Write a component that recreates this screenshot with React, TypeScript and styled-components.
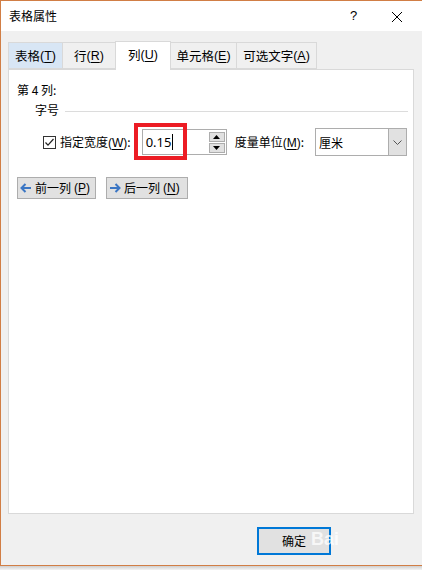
import styled, { createGlobalStyle } from 'styled-components'

const GlobalStyle = createGlobalStyle`
  html, body {
    margin: 0;
    padding: 0;
    background: #fff;
    overflow: hidden;
  }
  body {
    font-family: "Noto Sans CJK SC", "Microsoft YaHei", "Noto Sans", sans-serif;
    font-size: 12px;
    color: #000;
  }
`;

const tabs = [
  { label: '表格', key: 'T', width: 55, hover: true },
  { label: '行', key: 'R', width: 54 },
  { label: '列', key: 'U', width: 56, active: true },
  { label: '单元格', key: 'E', width: 67 },
  { label: '可选文字', key: 'A', width: 81 },
];

function Key({ k }: { k: string }) {
  return <Mnemonic>(<U>{k}</U>)</Mnemonic>;
}

export default function App() {
  return (
    <>
      <GlobalStyle />
      <Page>
        <Window>
          <TitleBar>
            <Title>表格属性</Title>
            <TitleButtons>
              <Help>?</Help>
              <Close>
                <svg width="12" height="12" viewBox="0 0 12 12">
                  <path d="M1 1L11 11M11 1L1 11" stroke="#000" strokeWidth="1" />
                </svg>
              </Close>
            </TitleButtons>
          </TitleBar>
          <Body>
            <TabStrip>
              {tabs.map(t => (
                <Tab key={t.key} $w={t.width} $active={!!t.active} $hover={!!t.hover}>
                  {t.label}<Key k={t.key} />
                </Tab>
              ))}
            </TabStrip>
            <Panel>
              <Heading>第 4 列:</Heading>
              <GroupHead>
                <span>字号</span>
                <Rule />
              </GroupHead>
              <FieldRow>
                <Check>
                  <svg width="11" height="11" viewBox="0 0 11 11">
                    <path d="M1.5 5.5L4 8.2L9.5 2" stroke="#222" strokeWidth="1.2" fill="none" />
                  </svg>
                </Check>
                <Label>指定宽度<Key k="W" />:</Label>
                <Spin>
                  <SpinText>0.15<Caret /></SpinText>
                  <SpinButtons>
                    <SpinBtn>
                      <svg width="7" height="4" viewBox="0 0 7 4"><path d="M3.5 0L7 4H0Z" fill="#000" /></svg>
                    </SpinBtn>
                    <SpinBtn>
                      <svg width="7" height="4" viewBox="0 0 7 4"><path d="M0 0H7L3.5 4Z" fill="#000" /></svg>
                    </SpinBtn>
                  </SpinButtons>
                  <Highlight />
                </Spin>
                <UnitLabel>度量单位<Key k="M" />:</UnitLabel>
                <Select>
                  <SelectText>厘米</SelectText>
                  <SelectArrow>
                    <svg width="9" height="5" viewBox="0 0 9 5">
                      <path d="M0.5 0.5L4.5 4.5L8.5 0.5" stroke="#555" strokeWidth="1" fill="none" />
                    </svg>
                  </SelectArrow>
                </Select>
              </FieldRow>
              <NavRow>
                <NavButton $w={79}>
                  <svg width="12" height="10" viewBox="0 0 12 10">
                    <path d="M11 5H2M5.5 1L1.5 5L5.5 9" stroke="#3b76c4" strokeWidth="2" fill="none" />
                  </svg>
                  前一列<Key k="P" />
                </NavButton>
                <NavButton $w={82}>
                  <svg width="12" height="10" viewBox="0 0 12 10">
                    <path d="M1 5H10M6.5 1L10.5 5L6.5 9" stroke="#3b76c4" strokeWidth="2" fill="none" />
                  </svg>
                  后一列<Key k="N" />
                </NavButton>
              </NavRow>
            </Panel>
            <Footer>
              <OkButton>
                确定
                <Watermark>Bai</Watermark>
              </OkButton>
            </Footer>
          </Body>
        </Window>
        <Shadow />
      </Page>
    </>
  );
}

const Page = styled.div`
  width: 422px;
  height: 570px;
  display: flex;
  flex-direction: column;
  overflow: hidden;
`;

const Window = styled.div`
  width: 430px;
  height: 564px;
  border-top: 1px solid #d17e45;
  border-left: 1px solid #d17e45;
  border-bottom: 1px solid #d17e45;
  display: flex;
  flex-direction: column;
  background: #f0f0f0;
`;

const Shadow = styled.div`
  height: 4px;
  background: linear-gradient(#cfcfcf, #f4f4f4);
`;

const TitleBar = styled.div`
  height: 30px;
  background: #fff;
  display: flex;
  align-items: center;
  padding-left: 8px;
`;

const Title = styled.div`
  font-size: 12px;
  line-height: 16px;
`;

const TitleButtons = styled.div`
  display: flex;
  align-items: center;
  margin-left: auto;
  width: 83px;
  position: relative;
  left: -10px;
`;

const Help = styled.div`
  width: 41px;
  padding-left: 12px;
  font-family: "Liberation Sans", sans-serif;
  font-size: 13px;
  line-height: 16px;
`;

const Close = styled.div`
  display: flex;
  align-items: center;
  padding-top: 1px;
`;

const Body = styled.div`
  flex: 1;
  display: flex;
  flex-direction: column;
  padding: 10px 0 0 7px;
`;

const TabStrip = styled.div`
  display: flex;
  align-items: flex-end;
  height: 28px;
  position: relative;
  z-index: 1;
`;

const Tab = styled.div<{ $w: number; $active: boolean; $hover: boolean }>`
  box-sizing: border-box;
  width: ${p => p.$w}px;
  height: ${p => (p.$active ? 29 : 27)}px;
  margin-bottom: ${p => (p.$active ? -1 : 0)}px;
  border: 1px solid #d9d9d9;
  border-bottom: ${p => (p.$active ? 'none' : '1px solid #d9d9d9')};
  margin-left: -1px;
  background: ${p => (p.$active ? '#fff' : p.$hover ? '#d8e6f5' : '#f0f0f0')};
  display: flex;
  align-items: center;
  justify-content: center;
  padding-bottom: ${p => (p.$active ? 2 : 0)}px;
  font-size: 12.5px;
  line-height: 16px;
  white-space: nowrap;
  &:first-child { margin-left: 0; }
`;

const Mnemonic = styled.span`
  font-family: "Liberation Sans", "Noto Sans", sans-serif;
`;

const U = styled.span`
  text-decoration: underline;
  text-underline-offset: 2px;
`;

const Panel = styled.div`
  box-sizing: border-box;
  width: 406px;
  height: 445px;
  background: #fff;
  border: 1px solid #d9d9d9;
  padding: 12px 0 0 8px;
`;

const Heading = styled.div`
  line-height: 16px;
`;

const GroupHead = styled.div`
  display: flex;
  align-items: center;
  gap: 6px;
  margin: 4px 5px 0 18px;
  line-height: 16px;
`;

const Rule = styled.div`
  flex: 1;
  height: 1px;
  background: #dcdcdc;
  margin-top: 2px;
`;

const FieldRow = styled.div`
  display: flex;
  align-items: center;
  margin: 6px 0 0 26px;
  height: 36px;
`;

const Check = styled.div`
  box-sizing: border-box;
  width: 13px;
  height: 13px;
  border: 1px solid #333;
  display: flex;
  align-items: center;
  justify-content: center;
  margin-right: 4px;
  margin-top: 1px;
`;

const Label = styled.span`
  line-height: 16px;
`;

const Spin = styled.div`
  position: relative;
  box-sizing: border-box;
  width: 85px;
  height: 26px;
  margin-left: 11px;
  border: 1px solid #adadad;
  display: flex;
  align-items: center;
  background: #fff;
`;

/* red annotation frame drawn over the width field */
const Highlight = styled.div`
  position: absolute;
  left: -9px;
  top: -7px;
  box-sizing: border-box;
  width: 53px;
  height: 37px;
  border: 4px solid #ec1c24;
  pointer-events: none;
`;

const SpinText = styled.div`
  flex: 1;
  padding-left: 3px;
  display: flex;
  align-items: center;
  font-size: 13px;
  line-height: 16px;
  font-family: "Noto Sans", sans-serif;
`;

const Caret = styled.span`
  display: inline-block;
  width: 1px;
  height: 16px;
  background: #000;
  margin-left: 1px;
`;

const SpinButtons = styled.div`
  display: flex;
  flex-direction: column;
  gap: 1px;
  margin-right: 1px;
`;

const SpinBtn = styled.div`
  width: 16px;
  height: 10px;
  background: #e1e1e1;
  border: 1px solid #adadad;
  display: flex;
  align-items: center;
  justify-content: center;
  box-sizing: border-box;
`;

const UnitLabel = styled.span`
  margin-left: 8px;
  line-height: 16px;
`;

const Select = styled.div`
  box-sizing: border-box;
  width: 92px;
  height: 28px;
  margin-left: 11px;
  border: 1px solid #adadad;
  display: flex;
  align-items: stretch;
  background: #fff;
`;

const SelectText = styled.div`
  flex: 1;
  padding-left: 3px;
  display: flex;
  align-items: center;
`;

const SelectArrow = styled.div`
  width: 17px;
  background: #e1e1e1;
  border-left: 1px solid #adadad;
  display: flex;
  align-items: center;
  justify-content: center;
`;

const NavRow = styled.div`
  display: flex;
  gap: 10px;
  margin-top: 17px;
`;

const NavButton = styled.div<{ $w: number }>`
  box-sizing: border-box;
  width: ${p => p.$w}px;
  height: 22px;
  background: #e1e1e1;
  border: 1px solid #adadad;
  display: flex;
  align-items: center;
  gap: 3px;
  padding-left: 2px;
  line-height: 16px;
`;

const Footer = styled.div`
  display: flex;
  padding: 13px 0 0 249px;
`;

const OkButton = styled.div`
  box-sizing: border-box;
  width: 74px;
  height: 28px;
  border: 2px solid #0078d7;
  background: #e1e1e1;
  display: flex;
  align-items: center;
  justify-content: center;
  position: relative;
  line-height: 16px;
`;

const Watermark = styled.div`
  position: absolute;
  left: 52px;
  top: 1px;
  color: rgba(255, 255, 255, 0.75);
  font-family: "Liberation Sans", sans-serif;
  font-weight: bold;
  font-size: 18px;
  line-height: 18px;
`;
